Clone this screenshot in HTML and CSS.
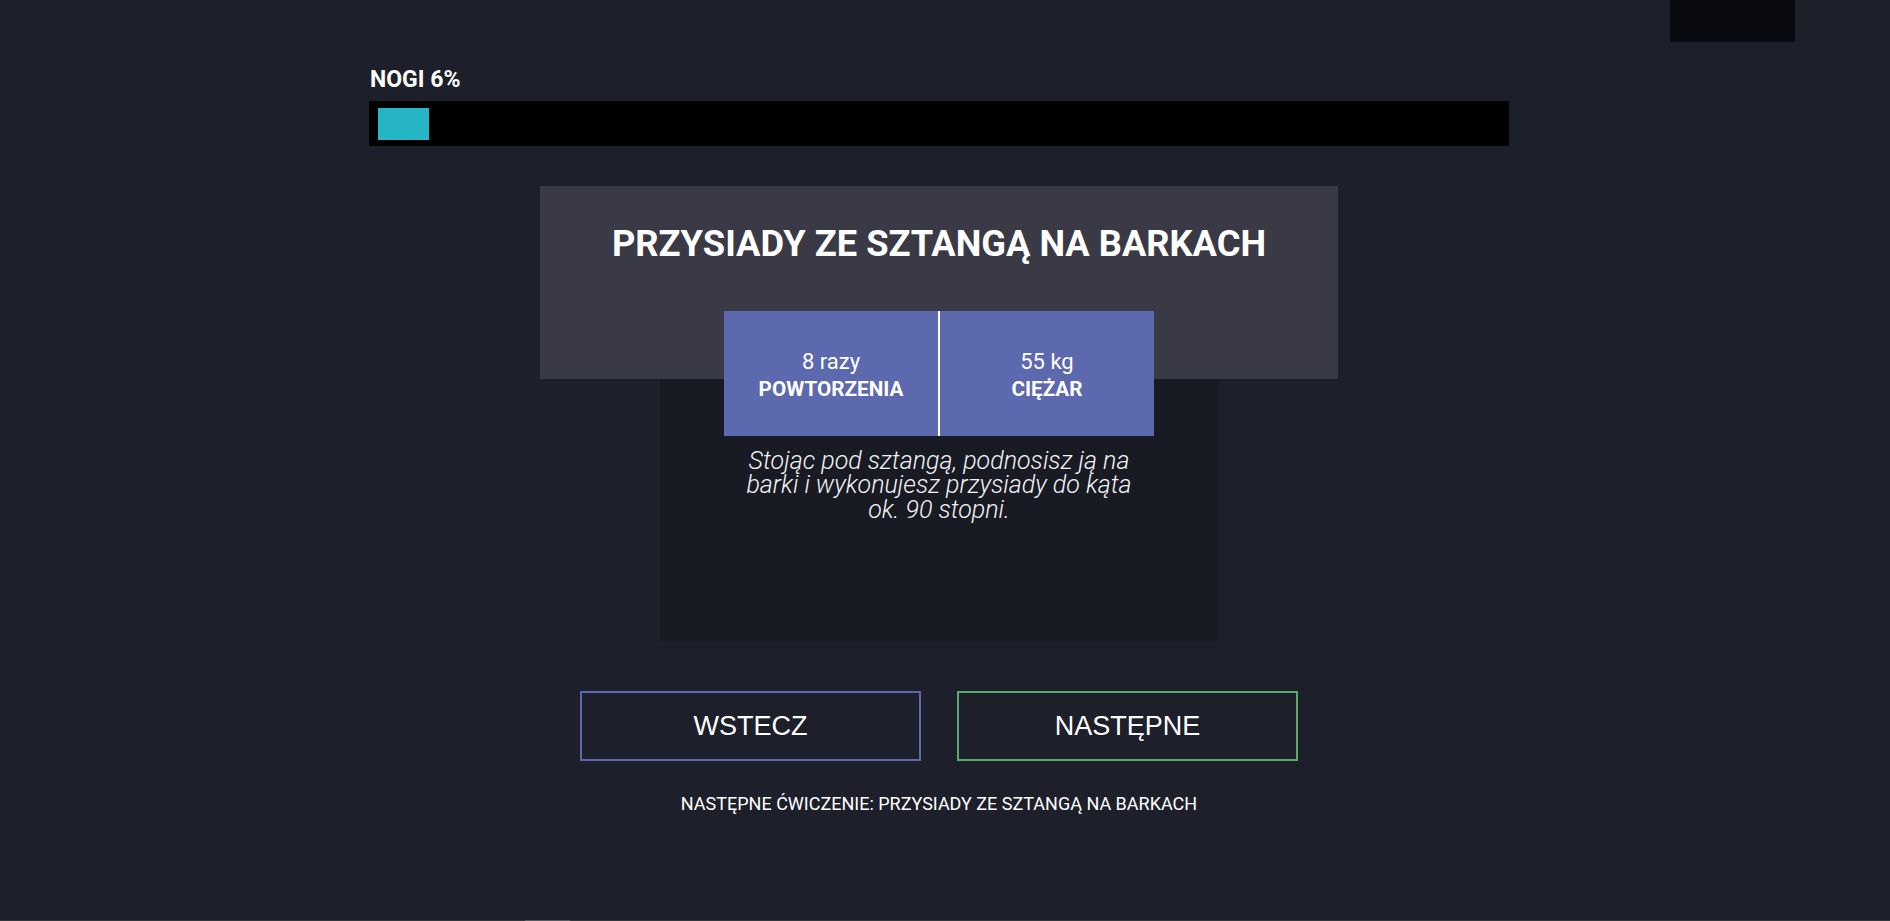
FILE: index.html
```html
<!DOCTYPE html>
<html lang="pl">
<head>
<meta charset="utf-8">
<title>Trening</title>
<link rel="stylesheet" href="styles.css">
</head>
<body>
<div class="corner-box"></div>
<main class="page">
  <section class="progress">
    <div class="progress-label">NOGI 6%</div>
    <div class="progress-track"><div class="progress-fill" style="width:51px"></div></div>
  </section>

  <section class="card">
    <header class="card-head">
      <h1 class="card-title">PRZYSIADY ZE SZTANGĄ NA BARKACH</h1>
    </header>
    <div class="card-body">
      <div class="stats">
        <div class="stat">
          <span class="stat-value">8 razy</span>
          <span class="stat-label">POWTORZENIA</span>
        </div>
        <div class="stat-divider"></div>
        <div class="stat">
          <span class="stat-value">55 kg</span>
          <span class="stat-label">CIĘŻAR</span>
        </div>
      </div>
      <p class="desc">Stojąc pod sztangą, podnosisz ją na barki i wykonujesz przysiady do kąta ok. 90 stopni.</p>
    </div>
  </section>

  <div class="actions">
    <button class="btn btn-back">WSTECZ</button>
    <button class="btn btn-next">NASTĘPNE</button>
  </div>

  <p class="next-info">NASTĘPNE ĆWICZENIE: PRZYSIADY ZE SZTANGĄ NA BARKACH</p>
</main>
<div class="scroll-line"><div class="scroll-thumb"></div></div>
</body>
</html>
```

FILE: styles.css
```css
html, body {
  margin: 0;
  padding: 0;
}
body {
  background: #1d1f2b;
  color: #ffffff;
  font-family: Roboto, "Noto Sans", sans-serif;
  min-height: 921px;
  padding-right: 12px;
  box-sizing: border-box;
  overflow: hidden;
}
.corner-box {
  position: absolute;
  top: 0;
  left: 1670px;
  width: 125px;
  height: 42px;
  background: #0a0b10;
}
.page {
  width: 1140px;
  margin: 0 auto;
  padding-top: 66px;
  display: flex;
  flex-direction: column;
  align-items: center;
}
.progress {
  align-self: stretch;
}
.progress-label {
  font-weight: 700;
  font-size: 23px;
  line-height: 28px;
  margin-bottom: 7px;
  padding-left: 1px;
}
.progress-track {
  background: #000000;
  height: 45px;
  padding: 7px 9px 6px;
  box-sizing: border-box;
}
.progress-fill {
  height: 32px;
  background: #25b5c5;
}
.card {
  margin-top: 40px;
  display: flex;
  flex-direction: column;
  align-items: center;
}
.card-head {
  width: 798px;
  height: 193px;
  background: #3a3946;
  padding-top: 37px;
  box-sizing: border-box;
  text-align: center;
}
.card-title {
  margin: 0;
  font-size: 36.3px;
  font-weight: 700;
  line-height: 42px;
}
.card-body {
  width: 558px;
  height: 262px;
  background: #181a24;
  display: flex;
  flex-direction: column;
  align-items: center;
}
.stats {
  margin-top: -68px;
  width: 430px;
  height: 125px;
  display: flex;
  background: #5c69ae;
}
.stat {
  flex: 1;
  display: flex;
  flex-direction: column;
  align-items: center;
  justify-content: center;
  padding-top: 2px;
}
.stat-value {
  font-size: 22px;
  line-height: 28px;
}
.stat-label {
  font-size: 20.7px;
  font-weight: 700;
  line-height: 26px;
}
.stat-divider {
  width: 2px;
  background: #ffffff;
}
.desc {
  margin: 13px 0 0;
  width: 410px;
  text-align: center;
  font-size: 25px;
  font-style: italic;
  font-weight: 300;
  line-height: 24.3px;
  color: #f4f4f4;
}
.actions {
  margin-top: 50px;
  display: flex;
  gap: 36px;
}
.btn {
  width: 341px;
  height: 70px;
  background: transparent;
  color: #ffffff;
  font-family: "Liberation Sans", Arial, sans-serif;
  font-size: 27px;
  border: 2px solid #5c69ae;
  padding: 0;
  cursor: pointer;
}
.btn-next {
  border-color: #58ad6c;
}
.next-info {
  margin: 32px 0 0;
  font-size: 18px;
  line-height: 21px;
}
.scroll-line {
  position: fixed;
  left: 0;
  right: 0;
  bottom: 0;
  height: 1px;
  background: #35363d;
}
.scroll-thumb {
  margin-left: 525px;
  width: 45px;
  height: 1px;
  background: #5a5b62;
}
```
